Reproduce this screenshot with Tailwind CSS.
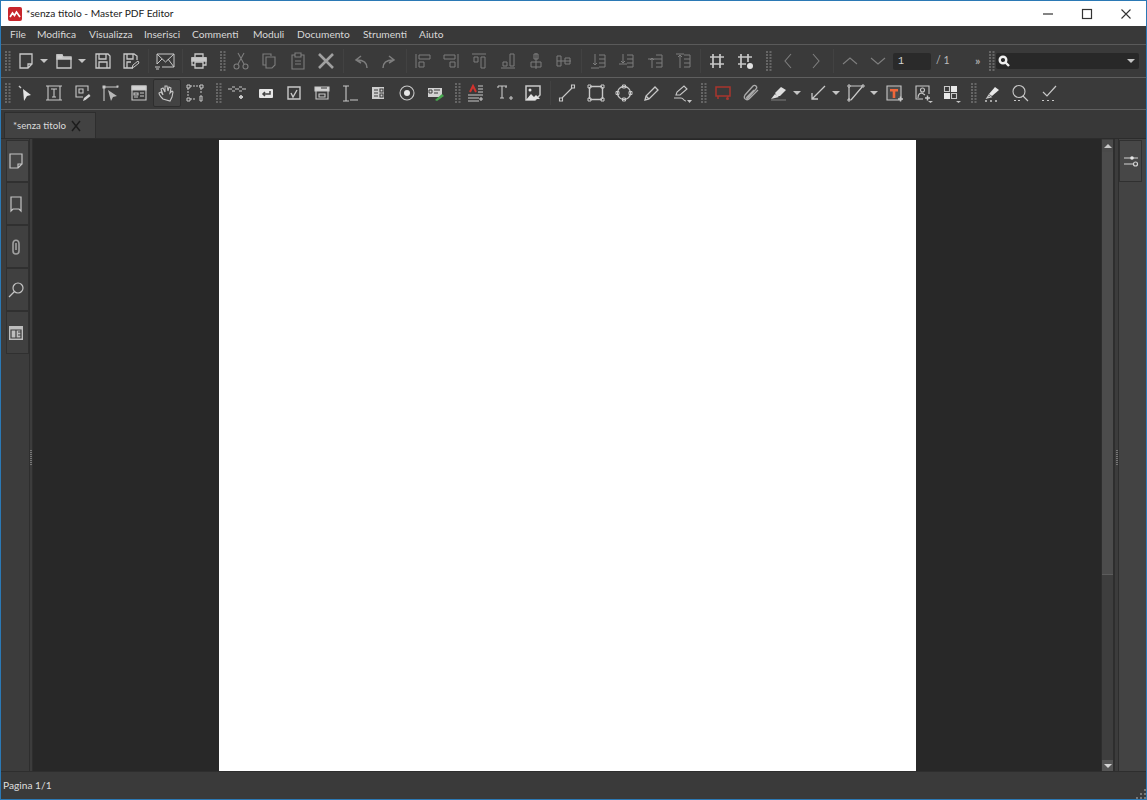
<!DOCTYPE html>
<html lang="it">
<head>
  <meta charset="UTF-8" />
  <title>*senza titolo - Master PDF Editor</title>
  <script src="https://cdn.jsdelivr.net/npm/@tailwindcss/browser@4"></script>
</head>
<body class="bg-[#3a3a3a]">
<div class="w-[1147px] h-[800px] overflow-hidden flex flex-col border border-[#2b79b5] bg-[#3a3a3a] font-['Lato','Open_Sans',sans-serif] text-[#d6d6d6]">

  <!-- Titolo -->
  <div class="h-[25px] shrink-0 bg-white flex items-center text-black">
    <svg class="ml-[7px] w-[14px] h-[14px]" viewBox="0 0 14 14"><rect width="14" height="14" rx="2" fill="#c8262c"/><path d="M2 10l2.500-4 2 2.500 2-3.500 3.500 5" fill="none" stroke="#fff" stroke-width="1.700"/></svg>
    <span class="ml-[4px] text-[10.200px] text-[#222]">*senza titolo - Master PDF Editor</span>
    <div class="ml-auto flex items-center">
      <svg class="w-[14px] h-[14px]" viewBox="0 0 14 14"><path d="M2 7h10" stroke="#333" stroke-width="1.200"/></svg>
      <svg class="ml-[25px] w-[14px] h-[14px]" viewBox="0 0 14 14"><rect x="2.500" y="2.500" width="9" height="9" fill="none" stroke="#333" stroke-width="1.200"/></svg>
      <svg class="ml-[25px] mr-[13px] w-[14px] h-[14px]" viewBox="0 0 14 14"><path d="M2.500 2.500l9 9M11.500 2.500l-9 9" stroke="#333" stroke-width="1.100"/></svg>
    </div>
  </div>

  <!-- Menu -->
  <div class="h-[19px] shrink-0 flex items-center pl-[9px] text-[10.200px] bg-[#393939] border-b border-[#5a5a5a] text-[#d8d8d8]">
    <span class="w-[27px]">File</span>
    <span class="w-[52px]">Modifica</span>
    <span class="w-[55px]">Visualizza</span>
    <span class="w-[48px]">Inserisci</span>
    <span class="w-[61px]">Commenti</span>
    <span class="w-[44px]">Moduli</span>
    <span class="w-[66px]">Documento</span>
    <span class="w-[56px]">Strumenti</span>
    <span>Aiuto</span>
  </div>

  <!-- Barra 1 -->
  <div class="h-[33px] shrink-0 flex items-center border-b border-[#5f5f5f] fill-none stroke-[#c8c8c8] stroke-[1.300]">
    <svg class="ml-[4px] w-[6px] h-[20px]" viewBox="0 0 6 20"><path d="M1 0V20M4.500 0V20" stroke="#666" stroke-width="2" stroke-dasharray="2 1"/></svg>
    <span class="ml-[1px] w-7 h-7 flex items-center justify-center"><svg class="w-5 h-5" viewBox="0 0 20 20"><path d="M4 3h12v10l-4 4H4zM16 13h-4v4"/></svg></span>
    <svg class="w-[8px] h-[6px]" viewBox="0 0 8 6"><path d="M0 1h8L4 5z" fill="#c4c4c4" stroke="none"/></svg>
    <span class="ml-[2px] w-7 h-7 flex items-center justify-center"><svg class="w-5 h-5" viewBox="0 0 20 20"><path d="M3 4h5l1 2h8v11H3z"/><path d="M3 4h5l1 3h8v1H3z" fill="#d2d2d2"/></svg></span>
    <svg class="w-[8px] h-[6px]" viewBox="0 0 8 6"><path d="M0 1h8L4 5z" fill="#c4c4c4" stroke="none"/></svg>
    <span class="ml-[3px] w-7 h-7 flex items-center justify-center"><svg class="w-5 h-5" viewBox="0 0 20 20"><path d="M3 3h12l2 2v12H3zM6 3v5h7V3M6 17v-6h8v6"/></svg></span>
    <span class="w-7 h-7 flex items-center justify-center"><svg class="w-5 h-5" viewBox="0 0 20 20"><path d="M12 17H3V3h10l3 2v4M6 3v5h6V3M6 17v-6h4"/><path d="M11 17l1-3 5-4 1 2-5 4z" stroke-width="1"/></svg></span>
    <i class="ml-[3px] mr-[2px] w-px h-[24px] bg-[#424242]"></i>
    <span class="w-7 h-7 flex items-center justify-center"><svg class="w-[22px] h-[22px]" viewBox="0 0 22 22"><path d="M3 14V4h17v13H8M3 4l8.500 8L20 4M3 14l5-5M20 17l-6-8" stroke-width="1"/><path d="M1 17h5M2 19h3" stroke-width="1"/></svg></span>
    <i class="ml-[3px] mr-[2px] w-px h-[24px] bg-[#424242]"></i>
    <span class="w-7 h-7 flex items-center justify-center"><svg class="w-5 h-5" viewBox="0 0 20 20"><path d="M6 6V3h8v3M6 14H3V7h14v7h-3M6 11h8v6H6z" stroke-width="1.300"/><path d="M3 7h14v3H3z" fill="#c8c8c8"/></svg></span>
    <svg class="ml-[7px] w-[6px] h-[20px]" viewBox="0 0 6 20"><path d="M1 0V20M4.500 0V20" stroke="#666" stroke-width="2" stroke-dasharray="2 1"/></svg>
    <div class="flex items-center stroke-[#7d7d7d] stroke-[1.100]">
      <span class="ml-[1px] w-7 h-7 flex items-center justify-center"><svg class="w-5 h-5" viewBox="0 0 20 20"><path d="M7 2l6 11M13 2L7 13"/><circle cx="5.500" cy="15.500" r="2.500"/><circle cx="14.500" cy="15.500" r="2.500"/></svg></span>
      <span class="w-7 h-7 flex items-center justify-center"><svg class="w-5 h-5" viewBox="0 0 20 20"><path d="M7 14H4V3h8v2M7 6h9v8l-3 3H7z"/></svg></span>
      <span class="ml-[1px] w-7 h-7 flex items-center justify-center"><svg class="w-5 h-5" viewBox="0 0 20 20"><path d="M7 4H4v14h12V4h-3M7 2h6v4H7zM7 10h6M7 13h6"/></svg></span>
      <span class="w-7 h-7 flex items-center justify-center"><svg class="w-5 h-5" viewBox="0 0 20 20"><path d="M3 3l14 14M17 3L3 17" stroke="#a0a0a0" stroke-width="2.600"/></svg></span>
      <i class="ml-[3px] mr-[3px] w-px h-[24px] bg-[#424242]"></i>
      <span class="w-7 h-7 flex items-center justify-center"><svg class="w-5 h-5" viewBox="0 0 20 20"><path d="M16 17c0-5-3-8-10-8M10 5L5 9l5 3" stroke-width="1.500"/></svg></span>
      <span class="w-7 h-7 flex items-center justify-center"><svg class="w-5 h-5" viewBox="0 0 20 20"><path d="M4 17c0-5 3-8 10-8M10 5l5 4-5 3" stroke-width="1.500"/></svg></span>
      <i class="ml-[3px] mr-[2px] w-px h-[24px] bg-[#424242]"></i>
      <span class="w-7 h-7 flex items-center justify-center"><svg class="w-5 h-5" viewBox="0 0 20 20"><path d="M3 3v14M6 4h11v4H6zM6 11h5v5H6z" stroke-width="1"/></svg></span>
      <span class="w-7 h-7 flex items-center justify-center"><svg class="w-5 h-5" viewBox="0 0 20 20"><path d="M17 3v14M3 4h11v4H3zM9 11h5v5H9z" stroke-width="1"/></svg></span>
      <span class="w-7 h-7 flex items-center justify-center"><svg class="w-5 h-5" viewBox="0 0 20 20"><path d="M3 3h14M5 6h4v5H5zM12 6h4v11h-4z" stroke-width="1"/></svg></span>
      <span class="ml-[1px] w-7 h-7 flex items-center justify-center"><svg class="w-5 h-5" viewBox="0 0 20 20"><path d="M3 17h14M5 11h4v4H5zM12 3h4v12h-4z" stroke-width="1"/></svg></span>
      <span class="w-7 h-7 flex items-center justify-center"><svg class="w-5 h-5" viewBox="0 0 20 20"><path d="M10 2v16M8 3h4v5H8zM5 11h10v5H5z" stroke-width="1"/></svg></span>
      <span class="w-7 h-7 flex items-center justify-center"><svg class="w-5 h-5" viewBox="0 0 20 20"><path d="M3 10h14M3 5h4v10H3zM11 7h5v6h-5z" stroke-width="1"/></svg></span>
      <i class="ml-[3px] mr-[2px] w-px h-[24px] bg-[#424242]"></i>
      <span class="w-7 h-7 flex items-center justify-center"><svg class="w-5 h-5" viewBox="0 0 20 20"><path d="M3 17h8M7 3v11M5 12l2 2 2-2M11 4h6v12h-6M11 8h6M11 12h6" stroke-width="1"/></svg></span>
      <span class="w-7 h-7 flex items-center justify-center"><svg class="w-5 h-5" viewBox="0 0 20 20"><path d="M3 13h8M7 3v9M5 10l2 2 2-2M11 4h6v12h-6M11 8h6M11 12h6" stroke-width="1"/></svg></span>
      <span class="ml-[1px] w-7 h-7 flex items-center justify-center"><svg class="w-5 h-5" viewBox="0 0 20 20"><path d="M3 8h8M7 7v10M5 9l2-2 2 2M11 4h6v12h-6M11 8h6M11 12h6" stroke-width="1"/></svg></span>
      <span class="w-7 h-7 flex items-center justify-center"><svg class="w-5 h-5" viewBox="0 0 20 20"><path d="M3 3h8M7 4v13M5 6l2-2 2 2M11 4h6v12h-6M11 8h6M11 12h6" stroke-width="1"/></svg></span>
    </div>
    <i class="ml-[3px] mr-[2px] w-px h-[24px] bg-[#424242]"></i>
    <span class="w-7 h-7 flex items-center justify-center"><svg class="w-5 h-5" viewBox="0 0 20 20"><path d="M6 3v14M13 3v14M3 6h14M3 13h14" stroke-width="1.700"/></svg></span>
    <span class="w-7 h-7 flex items-center justify-center"><svg class="w-5 h-5" viewBox="0 0 20 20"><path d="M6 3v14M13 3v8M3 6h14M3 13h8" stroke-width="1.700"/><circle cx="15" cy="15" r="3" fill="#e2e2e2" stroke="none"/></svg></span>
    <svg class="ml-[7px] w-[6px] h-[20px]" viewBox="0 0 6 20"><path d="M1 0V20M4.500 0V20" stroke="#666" stroke-width="2" stroke-dasharray="2 1"/></svg>
    <div class="flex items-center stroke-[#7f7f7f] stroke-[1.100]">
      <span class="ml-[2px] w-7 h-7 flex items-center justify-center"><svg class="w-5 h-5" viewBox="0 0 20 20"><path d="M13 3l-6 7 6 7"/></svg></span>
      <span class="w-7 h-7 flex items-center justify-center"><svg class="w-5 h-5" viewBox="0 0 20 20"><path d="M7 3l6 7-6 7"/></svg></span>
      <i class="ml-[3px] mr-[2px] w-px h-[24px] bg-[#424242]"></i>
      <span class="w-7 h-7 flex items-center justify-center"><svg class="w-5 h-5" viewBox="0 0 20 20"><path d="M3 13l7-6 7 6"/></svg></span>
      <span class="w-7 h-7 flex items-center justify-center"><svg class="w-5 h-5" viewBox="0 0 20 20"><path d="M3 7l7 6 7-6"/></svg></span>
    </div>
    <span class="ml-[1px] w-[38px] h-[17px] rounded-[2px] bg-[#2a2a2a] pl-[5px] font-['Liberation_Mono',monospace] text-[10px] leading-[17px] text-[#d6d6d6]">1</span>
    <span class="ml-[5px] w-[14px] whitespace-nowrap text-[10.500px] text-[#bdbdbd]">/ 1</span>
    <span class="ml-[25px] w-[10px] text-[12px] font-bold leading-none text-[#a8a8a8]">»</span>
    <svg class="ml-[4px] w-[6px] h-[20px]" viewBox="0 0 6 20"><path d="M1 0V20M4.500 0V20" stroke="#666" stroke-width="2" stroke-dasharray="2 1"/></svg>
    <div class="ml-[1px] w-[143px] h-[16px] rounded-[2px] bg-[#282828] flex items-center pl-[2px] pr-[4px]">
      <svg class="w-[12px] h-[12px]" viewBox="0 0 12 12"><circle cx="5" cy="5" r="3.300" stroke="#f0f0f0" stroke-width="2.400"/><path d="M7.500 7.500L11 11" stroke="#f0f0f0" stroke-width="2.400"/></svg>
      <svg class="ml-auto w-[8px] h-[6px]" viewBox="0 0 8 6"><path d="M0 1h8L4 5z" fill="#c4c4c4" stroke="none"/></svg>
    </div>
  </div>

  <!-- Barra 2 -->
  <div class="h-[32px] shrink-0 pb-[1px] flex items-center border-b border-[#5f5f5f] fill-none stroke-[#c8c8c8] stroke-[1.100]">
    <svg class="ml-[4px] w-[6px] h-[20px]" viewBox="0 0 6 20"><path d="M1 0V20M4.500 0V20" stroke="#666" stroke-width="2" stroke-dasharray="2 1"/></svg>
    <span class="w-7 h-7 flex items-center justify-center"><svg class="w-5 h-5" viewBox="0 0 20 20"><path d="M8 6l8 6-4 1-3 5z" fill="#e4e4e4" stroke="none"/><path d="M4 3l2 2" stroke-width="1.500"/></svg></span>
    <span class="ml-[1px] w-7 h-7 flex items-center justify-center"><svg class="w-5 h-5" viewBox="0 0 20 20"><path d="M2 3h16M2 17h16M4 3v14M16 3v14M7 6h6M10 6v8M8 14h4"/></svg></span>
    <span class="w-7 h-7 flex items-center justify-center"><svg class="w-5 h-5" viewBox="0 0 20 20"><path d="M11 14H4V3h12v5M7 6h4v4H7z"/><path d="M11 18l1-3 5-4 1.500 2-5 4z" fill="#d2d2d2" stroke="none"/></svg></span>
    <span class="w-7 h-7 flex items-center justify-center"><svg class="w-5 h-5" viewBox="0 0 20 20"><path d="M4 18V4h14"/><path d="M8 7l9 6-4 1-2 4z" fill="#b8b8b8" stroke="none"/><path d="M2.500 2.500h3v3h-3zM16.500 2.500h2v2h-2z" fill="#c8c8c8" stroke="none"/></svg></span>
    <span class="ml-[1px] w-7 h-7 flex items-center justify-center"><svg class="w-5 h-5" viewBox="0 0 20 20"><path d="M3 3h14v14H3z"/><path d="M3 3h14v4H3z" fill="#d2d2d2"/><path d="M5 10h4v2H5zM5 14h4M11 10h4M11 13h4"/></svg></span>
    <span class="w-7 h-7 flex items-center justify-center rounded-[2px] border border-[#2e2e2e] bg-[#434343]"><svg class="w-5 h-5" viewBox="0 0 20 20"><path d="M6 16c-2-2-4-4-4-6l2-1 2 3-2-6 2-1 2 4V3h2l1 5 1-4 2 1-1 5 2-2 1 1-1 5-2 4z"/></svg></span>
    <span class="w-7 h-7 flex items-center justify-center"><svg class="w-5 h-5" viewBox="0 0 20 20"><path d="M3 5v9M5 3h10M5 16h6M16 5v5" stroke-width="1" stroke-dasharray="2 1"/><path d="M2 2h3v3H2zM15 2h3v3h-3zM2 15h3v3H2zM15 13h2v5h-2z" stroke-width="1"/></svg></span>
    <svg class="ml-[7px] w-[6px] h-[20px]" viewBox="0 0 6 20"><path d="M1 0V20M4.500 0V20" stroke="#666" stroke-width="2" stroke-dasharray="2 1"/></svg>
    <span class="ml-[1px] w-7 h-7 flex items-center justify-center"><svg class="w-5 h-5" viewBox="0 0 20 20"><path d="M1 6h4M15 6h4M5 4h3M5 8h3M12 4h3M12 8h3M8 6h4"/><path d="M12 14h4M14 12v4" stroke-width="1.800"/></svg></span>
    <span class="ml-[1px] w-7 h-7 flex items-center justify-center"><svg class="w-5 h-5" viewBox="0 0 20 20"><rect x="3" y="6" width="14" height="9" rx="1" fill="#e6e6e6" stroke="none"/><path d="M14 8v3H7M9 9l-2 2 2 2" stroke="#444" stroke-width="1.500"/></svg></span>
    <span class="w-7 h-7 flex items-center justify-center"><svg class="w-5 h-5" viewBox="0 0 20 20"><path d="M4 4h12v12H4zM7 10l2 4 4-7" stroke-width="1.400"/></svg></span>
    <span class="w-7 h-7 flex items-center justify-center"><svg class="w-5 h-5" viewBox="0 0 20 20"><path d="M3 4h14v4H3z" fill="#d2d2d2"/><path d="M4 8v8h12V8M7 11h6v3H7z"/><path d="M9 5h6" stroke="#444"/></svg></span>
    <span class="w-7 h-7 flex items-center justify-center"><svg class="w-5 h-5" viewBox="0 0 20 20"><path d="M3 3h6M3 18h6M6 3v15M10 17h8"/></svg></span>
    <span class="w-7 h-7 flex items-center justify-center"><svg class="w-5 h-5" viewBox="0 0 20 20"><path d="M4 4h12v12H4z" fill="#cfcfcf" stroke="none"/><path d="M6 7h4M6 10h4M6 13h4M12 6h3v3h-3zM12 11h3v3h-3z" stroke="#3a3a3a"/></svg></span>
    <span class="ml-[1px] w-7 h-7 flex items-center justify-center"><svg class="w-5 h-5" viewBox="0 0 20 20"><circle cx="10" cy="10" r="7"/><circle cx="10" cy="10" r="3" fill="#e6e6e6" stroke="none"/></svg></span>
    <span class="w-7 h-7 flex items-center justify-center"><svg class="w-5 h-5" viewBox="0 0 20 20"><path d="M3 5h14v9H3z" fill="#d2d2d2" stroke="none"/><path d="M4 7h3v3H4zM9 7h6M9 10h4" stroke="#3a3a3a" stroke-width="1"/><path d="M10 17l7-6 2 2-7 5z" fill="#47a84f" stroke="none"/></svg></span>
    <svg class="ml-[6px] w-[6px] h-[20px]" viewBox="0 0 6 20"><path d="M1 0V20M4.500 0V20" stroke="#666" stroke-width="2" stroke-dasharray="2 1"/></svg>
    <span class="w-7 h-7 flex items-center justify-center"><svg class="w-5 h-5" viewBox="0 0 20 20"><path d="M5 9l3-6 3 6" stroke="#d2322d" stroke-width="2"/><path d="M13 3h5M13 6h5M13 9h5M3 12h15M3 15h11M3 18h11M16 14v4M14 16h4"/></svg></span>
    <span class="ml-[2px] w-7 h-7 flex items-center justify-center"><svg class="w-5 h-5" viewBox="0 0 20 20"><path d="M3 3h9M7 3v12M3 3v2M11 3v2M5 15h4M14 15h4M16 13v4"/></svg></span>
    <span class="w-7 h-7 flex items-center justify-center"><svg class="w-5 h-5" viewBox="0 0 20 20"><path d="M3 3h14v9l-5 5H3z" stroke-width="1.500"/><path d="M3 17l5-6 3 3 2-2 4 4h-4l-1 1H3z" fill="#e2e2e2" stroke="none"/><circle cx="7" cy="7" r="1.500" fill="#e2e2e2" stroke="none"/></svg></span>
    <i class="ml-[3px] mr-[2px] w-px h-[24px] bg-[#424242]"></i>
    <span class="w-7 h-7 flex items-center justify-center"><svg class="w-5 h-5" viewBox="0 0 20 20"><path d="M5 15L15 5"/><path d="M2.500 15h3v3h-3zM14.500 2h3v3h-3z"/></svg></span>
    <span class="ml-[1px] w-7 h-7 flex items-center justify-center"><svg class="w-5 h-5" viewBox="0 0 20 20"><path d="M3.500 4v12M16.500 4v12M4 3.500h12M4 16.500h12" stroke-width="1.400"/><path d="M2 2h3v3H2zM15 2h3v3h-3zM2 15h3v3H2zM15 15h3v3h-3z" stroke-width="1"/></svg></span>
    <span class="w-7 h-7 flex items-center justify-center"><svg class="w-5 h-5" viewBox="0 0 20 20"><circle cx="10" cy="10" r="6.500" stroke-width="1.300"/><path d="M8.500 2h3v3h-3zM8.500 15h3v3h-3zM2 8.500h3v3H2zM15 8.500h3v3h-3z" stroke-width="1"/></svg></span>
    <span class="w-7 h-7 flex items-center justify-center"><svg class="w-5 h-5" viewBox="0 0 20 20"><path d="M3 17l1-4 9-9 3 3-9 9zM4 13l3 3" stroke-width="1.300"/></svg></span>
    <span class="ml-[2px] w-7 h-7 flex items-center justify-center"><svg class="w-5 h-5" viewBox="0 0 20 20"><path d="M4 12l1-3 7-6 3 3-7 6zM2 15h7c3 0 2 3 5 3"/><path d="M15 17h5l-2.500 3z" fill="#c4c4c4" stroke="none"/></svg></span>
    <svg class="ml-[5px] w-[6px] h-[20px]" viewBox="0 0 6 20"><path d="M1 0V20M4.500 0V20" stroke="#666" stroke-width="2" stroke-dasharray="2 1"/></svg>
    <span class="ml-[2px] w-7 h-7 flex items-center justify-center"><svg class="w-5 h-5" viewBox="0 0 20 20"><path d="M3 4h14v9H3zM5 13v3M15 13v1" stroke="#a9362e" stroke-width="1.500"/><circle cx="14.500" cy="15.500" r="1.500" fill="#a9362e" stroke="none"/></svg></span>
    <span class="w-7 h-7 flex items-center justify-center"><svg class="w-5 h-5" viewBox="0 0 20 20"><path d="M17 7l-9 9c-3 2-6-1-4-4l8-9c2-2 5 1 3 3l-8 9c-1 1-2 0-1-1l7-7" stroke="#aaaaaa" stroke-width="1.300"/></svg></span>
    <span class="w-7 h-7 flex items-center justify-center"><svg class="w-5 h-5" viewBox="0 0 20 20"><path d="M6 10l6-6 5 3-6 6H8z" fill="#dedede" stroke="none"/><path d="M2 16l4-5 4 3z" fill="#dedede" stroke="none"/><path d="M2 17h15" stroke="#777"/></svg></span>
    <svg class="w-[8px] h-[6px]" viewBox="0 0 8 6"><path d="M0 1h8L4 5z" fill="#c4c4c4" stroke="none"/></svg>
    <span class="ml-[3px] w-7 h-7 flex items-center justify-center"><svg class="w-5 h-5" viewBox="0 0 20 20"><path d="M17 3L4 16M4 10v6h6" stroke-width="1.300"/></svg></span>
    <svg class="w-[8px] h-[6px]" viewBox="0 0 8 6"><path d="M0 1h8L4 5z" fill="#c4c4c4" stroke="none"/></svg>
    <span class="ml-[2px] w-7 h-7 flex items-center justify-center"><svg class="w-5 h-5" viewBox="0 0 20 20"><path d="M3 4v13M4 3h13M16 4L5 17" stroke-width="1.200"/><path d="M2 2h2v2H2zM16 2h2v2h-2zM2 16h2v2H2z" stroke-width="1"/></svg></span>
    <svg class="w-[8px] h-[6px]" viewBox="0 0 8 6"><path d="M0 1h8L4 5z" fill="#c4c4c4" stroke="none"/></svg>
    <span class="ml-[2px] w-7 h-7 flex items-center justify-center"><svg class="w-5 h-5" viewBox="0 0 20 20"><path d="M3 3h14v14H3z" fill="#4b4b4b"/><path d="M6 6h8v2.500h-2.700V15H8.700V8.500H6z" fill="#f0673a" stroke="none"/><path d="M14 16h5M16.500 13.500v5" stroke-width="1.500"/></svg></span>
    <span class="ml-[1px] w-7 h-7 flex items-center justify-center"><svg class="w-5 h-5" viewBox="0 0 20 20"><path d="M10 16H3V3h13v8"/><circle cx="9.500" cy="7" r="2"/><path d="M5 15c0-4 2-5 4-5l3 2"/><path d="M12 15h5M14.500 12.500v5" stroke-width="1.500"/><path d="M15 18h5l-2.500 2z" fill="#c4c4c4" stroke="none"/></svg></span>
    <span class="w-7 h-7 flex items-center justify-center"><svg class="w-5 h-5" viewBox="0 0 20 20"><path d="M3.500 3.500h5v5h-5zM10.500 10.500h5v5h-5z" stroke-width="1.100"/><path d="M10 3h6v6h-6zM3 10h6v6H3z" fill="#e8e8e8" stroke="none"/><path d="M15 18h5l-2.500 2z" fill="#c4c4c4" stroke="none"/></svg></span>
    <svg class="ml-[6px] w-[6px] h-[20px]" viewBox="0 0 6 20"><path d="M1 0V20M4.500 0V20" stroke="#666" stroke-width="2" stroke-dasharray="2 1"/></svg>
    <span class="ml-[1px] w-7 h-7 flex items-center justify-center"><svg class="w-5 h-5" viewBox="0 0 20 20"><path d="M7 11l6-7 4 3-7 6z" fill="#e8e8e8" stroke="none"/><path d="M5 15l2-3 2 2zM3 18h2M8 18h2M13 18h2" stroke-width="1.300"/></svg></span>
    <span class="w-7 h-7 flex items-center justify-center"><svg class="w-5 h-5" viewBox="0 0 20 20"><circle cx="9" cy="8.500" r="6"/><path d="M13 13l5 5M4 17.500h2M8 17.500h2" stroke-width="1.200"/></svg></span>
    <span class="ml-[1px] w-7 h-7 flex items-center justify-center"><svg class="w-5 h-5" viewBox="0 0 20 20"><path d="M4 9l4 4 9-10M3 17.500h2M8 17.500h2M13 17.500h2" stroke-width="1.200"/></svg></span>
  </div>

  <!-- Schede -->
  <div class="h-[29px] shrink-0 flex items-end pl-[3px] bg-[#383838] border-b border-[#2c2c2c]">
    <div class="w-[92px] h-[26px] flex items-center pl-[8px] bg-[#424242] border border-b-0 border-[#2e2e2e] text-[9.700px] text-[#dcdcdc]">
      <span class="w-[57px] whitespace-nowrap">*senza titolo</span>
      <svg class="w-[12px] h-[12px]" viewBox="0 0 12 12"><path d="M2 11L10 1" stroke="#1d1d1d" stroke-width="1.500"/><path d="M2 1l8 10" stroke="#1d1d1d" stroke-width="1.500"/></svg>
    </div>
  </div>

  <!-- Area principale -->
  <div class="flex-1 min-h-0 flex">
    <div class="w-[28px] shrink-0 pt-[1px] flex flex-col items-end fill-none stroke-[#c4c4c4] stroke-[1.200] bg-[#3c3c3c]">
      <div class="w-[23px] h-[42px] pr-[3px] flex items-center justify-center bg-[#464646] border border-[#303030]"><svg class="w-[18px] h-[18px]" viewBox="0 0 18 18"><path d="M3 2h12v10l-4 4H3zM15 12h-4v4"/></svg></div>
      <div class="w-[23px] h-[43px] pr-[3px] flex items-center justify-center bg-[#404040] border border-[#303030]"><svg class="w-[18px] h-[18px]" viewBox="0 0 18 18"><path d="M4 2h10v14l-2-2H6l-2 2z"/></svg></div>
      <div class="w-[23px] h-[43px] pr-[3px] flex items-center justify-center bg-[#404040] border border-[#303030]"><svg class="w-[18px] h-[18px]" viewBox="0 0 18 18"><path d="M6 6c0-5 6-5 6 0v7c0 4-6 4-6 0V6M9 5v7" stroke="#a0a0a0" stroke-width="1.600"/></svg></div>
      <div class="w-[23px] h-[43px] pr-[3px] flex items-center justify-center bg-[#404040] border border-[#303030]"><svg class="w-[18px] h-[18px]" viewBox="0 0 18 18"><circle cx="11" cy="7" r="5"/><path d="M7.500 10.500L2 16"/></svg></div>
      <div class="w-[23px] h-[43px] pr-[3px] flex items-center justify-center bg-[#404040] border border-[#303030]"><svg class="w-[18px] h-[18px]" viewBox="0 0 18 18"><path d="M2 2h14v14H2z" fill="#bdbdbd" stroke="none"/><path d="M4 6h10v8H4zM9 6v8M11 8h3M11 11h3" stroke="#3c3c3c" stroke-width="1.200"/></svg></div>
    </div>
    <div class="w-[4px] shrink-0 pt-[6px] flex items-center justify-center bg-[#3c3c3c] border-x border-[#2e2e2e]">
      <svg class="w-[2px] h-[16px]" viewBox="0 0 2 16"><path d="M1 0V16" stroke="#777" stroke-width="2" stroke-dasharray="1 1"/></svg>
    </div>
    <div class="w-[1068px] shrink-0 flex justify-center bg-[#282828] pt-[1px]">
      <div class="w-[697px] h-full bg-white"></div>
    </div>
    <div class="w-[13px] shrink-0 pt-[1px] flex flex-col bg-[#3e3e3e] border-x border-[#2e2e2e]">
      <div class="h-[12px] flex items-center justify-center bg-[#4a4a4a]"><svg class="w-[8px] h-[6px]" viewBox="0 0 8 6"><path d="M0 5h8L4 1z" fill="#c8c8c8"/></svg></div>
      <div class="h-[423px] bg-[#4c4c4c] border-b border-[#5c5c5c]"></div>
      <div class="flex-1"></div>
      <div class="h-[11px] flex items-center justify-center bg-[#555555]"><svg class="w-[8px] h-[6px]" viewBox="0 0 8 6"><path d="M0 1h8L4 5z" fill="#d4d4d4"/></svg></div>
    </div>
    <div class="w-[5px] shrink-0 pt-[6px] flex items-center justify-center bg-[#3c3c3c] border-x border-[#2e2e2e]">
      <svg class="w-[2px] h-[16px]" viewBox="0 0 2 16"><path d="M1 0V16" stroke="#777" stroke-width="2" stroke-dasharray="1 1"/></svg>
    </div>
    <div class="flex-1 min-w-0 pt-[1px] flex flex-col bg-[#434343]">
      <div class="w-[23px] h-[42px] flex items-center justify-center bg-[#474747] border border-[#303030]">
        <svg class="w-[16px] h-[14px]" viewBox="0 0 16 14"><path d="M1 4h14M1 10h10" stroke="#d4d4d4" stroke-width="1.200"/><circle cx="9" cy="4" r="1.800" fill="#e8e8e8"/><circle cx="12.500" cy="10" r="2" fill="none" stroke="#d4d4d4" stroke-width="1.200"/></svg>
      </div>
    </div>
  </div>

  <!-- Stato -->
  <div class="h-[28px] shrink-0 flex items-center pl-[2px] bg-[#3a3a3a] border-t border-[#2e2e2e] text-[10.200px] text-[#dedede]">
    <span>Pagina 1/1</span>
    <svg class="ml-auto mt-auto w-[10px] h-[10px]" viewBox="0 0 10 10"><path d="M8 0h2v2H8zM4 4h2v2H4zM8 4h2v2H8zM0 8h2v2H0zM4 8h2v2H4zM8 8h2v2H8z" fill="#777"/></svg>
  </div>
</div>
</body>
</html>
